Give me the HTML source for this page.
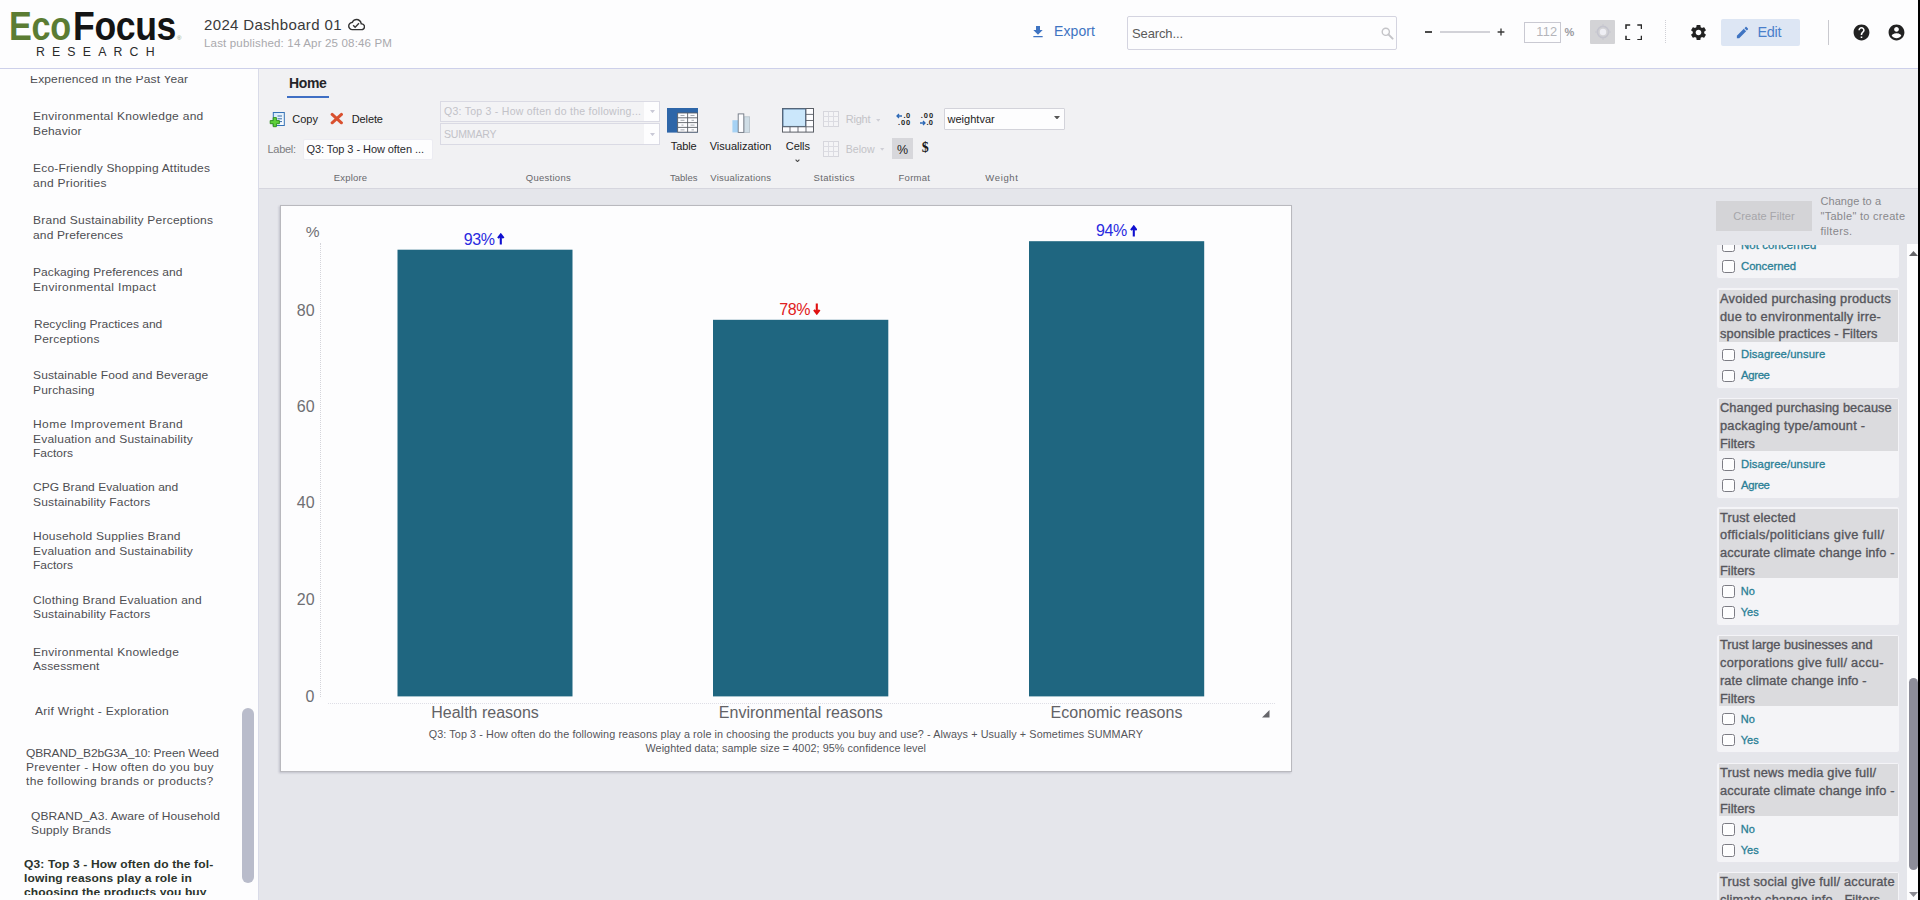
<!DOCTYPE html>
<html lang="en"><head><meta charset="utf-8"><title>2024 Dashboard 01</title>
<style>
html,body{margin:0;padding:0}
body{width:1920px;height:900px;overflow:hidden;position:relative;background:#e5e6eb;font-family:'Liberation Sans', sans-serif;}
header,aside,nav,main,section{display:block;position:static;margin:0;padding:0}
.t{position:absolute;white-space:pre;}
.a{position:absolute;}

</style></head><body>
<header class="topbar">
<div class="a" style="left:0px;top:0px;width:1920px;height:68px;background:#fdfdfe;"></div><div class="a" style="left:0px;top:68px;width:1920px;height:1px;background:#cdd0ea;"></div><svg class="a" style="left:348px;top:16.3px;" width="17.2" height="17.2" viewBox="0 0 24 24"><path fill="#333" d="M19.35 10.04C18.67 6.59 15.64 4 12 4 9.11 4 6.6 5.64 5.35 8.04 2.34 8.36 0 10.91 0 14c0 3.31 2.69 6 6 6h13c2.76 0 5-2.24 5-5 0-2.64-2.05-4.78-4.65-4.96zM19 18H6c-2.21 0-4-1.79-4-4 0-2.05 1.53-3.76 3.56-3.97l1.07-.11.5-.95C8.08 7.14 9.94 6 12 6c2.62 0 4.88 1.86 5.39 4.43l.3 1.5 1.53.11c1.56.1 2.78 1.41 2.78 2.96 0 1.65-1.35 3-3 3zm-9-3.82l-2.09-2.09L6.5 13.5 10 17l6.01-6.01-1.41-1.41z"/></svg><svg class="a" style="left:1030px;top:24.2px;" width="16" height="16" viewBox="0 0 24 24"><path fill="#3f74c2" d="M19 9h-4V3H9v6H5l7 7 7-7zM5 18v2h14v-2H5z"/></svg><div class="a" style="left:1127px;top:16px;width:268px;height:32px;background:#fdfdfe;border:1px solid #d4d4e0;border-radius:2px;"></div><svg class="a" style="left:1381px;top:27px;" width="13" height="13" viewBox="0 0 13 13"><circle cx="4.8" cy="4.8" r="3.6" fill="none" stroke="#c4c4c8" stroke-width="1.4"/><path d="M7.4 7.4 L11.6 11.6" stroke="#c4c4c8" stroke-width="2" stroke-linecap="round"/></svg><div class="a" style="left:1424.5px;top:31.2px;width:7.3px;height:1.4px;background:#4a4a4a;"></div><div class="a" style="left:1440px;top:31.2px;width:50.3px;height:1.6px;background:#d2d2d8;"></div><svg class="a" style="left:1496.5px;top:28px;" width="8" height="8" viewBox="0 0 8 8"><path d="M.6 4h6.800M4 .6v6.800" stroke="#3a3a3a" stroke-width="1.35"/></svg><div class="a" style="left:1524px;top:22px;width:35px;height:19px;background:#fdfdfe;border:1px solid #c9c9d2;"></div><div class="a" style="left:1590px;top:20px;width:25px;height:24px;background:#d3d3d6;border-radius:1px;"></div><svg class="a" style="left:1593.5px;top:23px;" width="18" height="18" viewBox="0 0 18 18"><circle cx="9" cy="9" r="5.600" fill="none" stroke="#c4c4ce" stroke-width="1.6"/><circle cx="9" cy="9" r="3.200" fill="#eeeef4"/><path d="M9 1v2.500M9 14.500V17M1 9h2.500M14.500 9H17" stroke="#c8c8d0" stroke-width="1.2"/></svg><svg class="a" style="left:1624.5px;top:23.6px;" width="17.5" height="16.8" viewBox="0 0 17.5 16.8"><path d="M1 5V1h4.200M12.300 1h4.200v4M16.500 11.800v4h-4.200M5.200 15.800H1v-4" fill="none" stroke="#2a2a2a" stroke-width="1.55"/></svg><div class="a" style="left:1665px;top:20px;width:0px;height:23px;background:transparent;border-left:1px dotted #d0d0d6;"></div><svg class="a" style="left:1688.5px;top:22.5px;" width="19" height="19" viewBox="0 0 24 24"><path fill="#222" d="M19.14 12.94c.04-.3.06-.61.06-.94 0-.32-.02-.64-.07-.94l2.03-1.58c.18-.14.23-.41.12-.61l-1.92-3.32c-.12-.22-.37-.29-.59-.22l-2.39.96c-.5-.38-1.03-.7-1.62-.94l-.36-2.54c-.04-.24-.24-.41-.48-.41h-3.84c-.24 0-.43.17-.47.41l-.36 2.54c-.59.24-1.13.57-1.62.94l-2.39-.96c-.22-.08-.47 0-.59.22L2.74 8.87c-.12.21-.08.47.12.61l2.03 1.58c-.05.3-.09.63-.09.94s.02.64.07.94l-2.03 1.58c-.18.14-.23.41-.12.61l1.92 3.32c.12.22.37.29.59.22l2.39-.96c.5.38 1.03.7 1.62.94l.36 2.54c.05.24.24.41.48.41h3.84c.24 0 .44-.17.47-.41l.36-2.54c.59-.24 1.13-.56 1.62-.94l2.39.96c.22.08.47 0 .59-.22l1.92-3.32c.12-.22.07-.47-.12-.61l-2.01-1.58zM12 15.6c-1.98 0-3.6-1.62-3.6-3.6s1.62-3.6 3.6-3.6 3.6 1.62 3.6 3.6-1.62 3.6-3.6 3.6z"/></svg><div class="a" style="left:1721px;top:19px;width:79px;height:27px;background:#dde6f4;border-radius:2px;"></div><svg class="a" style="left:1734.5px;top:24.5px;" width="15" height="15" viewBox="0 0 24 24"><path fill="#3f74c2" d="M3 17.25V21h3.75L17.81 9.94l-3.75-3.75L3 17.25zM20.71 7.04c.39-.39.39-1.02 0-1.41l-2.34-2.34c-.39-.39-1.02-.39-1.41 0l-1.83 1.83 3.75 3.75 1.83-1.83z"/></svg><div class="a" style="left:1828px;top:19.5px;width:1px;height:25px;background:#c9c9cf;"></div><svg class="a" style="left:1851.5px;top:22.5px;" width="19" height="19" viewBox="0 0 24 24"><path fill="#222" d="M12 2C6.48 2 2 6.48 2 12s4.48 10 10 10 10-4.48 10-10S17.52 2 12 2zm1 17h-2v-2h2v2zm2.07-7.75l-.9.92C13.45 12.9 13 13.5 13 15h-2v-.5c0-1.1.45-2.1 1.17-2.83l1.24-1.26c.37-.36.59-.86.59-1.41 0-1.1-.9-2-2-2s-2 .9-2 2H8c0-2.21 1.79-4 4-4s4 1.79 4 4c0 .88-.36 1.68-.93 2.25z"/></svg><svg class="a" style="left:1886.5px;top:22.5px;" width="19" height="19" viewBox="0 0 24 24"><path fill="#222" d="M12 2C6.48 2 2 6.48 2 12s4.48 10 10 10 10-4.48 10-10S17.52 2 12 2zm0 3c1.66 0 3 1.34 3 3s-1.34 3-3 3-3-1.34-3-3 1.34-3 3-3zm0 14.2c-2.5 0-4.71-1.28-6-3.22.03-1.99 4-3.08 6-3.08 1.99 0 5.97 1.09 6 3.08-1.29 1.94-3.5 3.22-6 3.22z"/></svg>
<span class="t" style="left:9.4px;top:2px;font-size:40px;line-height:48px;color:#5b7c33;font-weight:700;letter-spacing:-0.4px;transform-origin:0 0;transform:scaleX(0.8557);">Eco</span>
<span class="t" style="left:73.1px;top:2px;font-size:40px;line-height:48px;color:#141414;font-weight:700;letter-spacing:-0.4px;transform-origin:0 0;transform:scaleX(0.8899);">Focus</span>
<span class="t" style="left:177.0px;top:33px;font-size:6px;line-height:10px;color:#8a9a7a;">®</span>
<span class="t" style="left:35.9px;top:43px;font-size:12.3px;line-height:18px;color:#2a2a2a;letter-spacing:7.194px;">RESEARCH</span>
<span class="t" style="left:204.0px;top:14px;font-size:15px;line-height:21px;color:#3a3a3a;letter-spacing:0.357px;">2024 Dashboard 01</span>
<span class="t" style="left:204.0px;top:35px;font-size:11px;line-height:16px;color:#a9a9ad;letter-spacing:0.144px;transform-origin:0 0;transform:scaleX(1.05);">Last published: 14 Apr 25 08:46 PM</span>
<span class="t" style="left:1054.0px;top:21px;font-size:14px;line-height:20px;color:#3f74c2;letter-spacing:0.106px;">Export</span>
<span class="t" style="left:1132.0px;top:24px;font-size:13px;line-height:19px;color:#5a5a5a;letter-spacing:-0.129px;">Search...</span>
<span class="t" style="left:1536.2px;top:22px;font-size:12.8px;line-height:19px;color:#b4b4ba;letter-spacing:0.297px;">112</span>
<span class="t" style="left:1564.6px;top:24px;font-size:11px;line-height:16px;color:#9a9aa0;font-weight:700;">%</span>
<span class="t" style="left:1757.5px;top:22px;font-size:14.5px;line-height:20px;color:#4a7fcb;letter-spacing:-0.333px;">Edit</span>

</header>
<aside class="sidebar">
<div class="a" style="left:0px;top:69px;width:258px;height:831px;background:#fdfdfe;"></div><div class="a" style="left:258px;top:69px;width:1px;height:831px;background:#d9dbe8;"></div><div class="a" style="left:242px;top:708px;width:11.5px;height:175px;background:#b9bccb;border-radius:6px;"></div>
<span class="t" style="left:29.7px;top:71px;font-size:11.5px;line-height:16px;color:#4e4e52;letter-spacing:0.133px;transform-origin:0 0;transform:scaleX(1.045);">Experienced in the Past Year</span>
<span class="t" style="left:33.0px;top:108px;font-size:11.5px;line-height:16px;color:#4e4e52;letter-spacing:0.268px;transform-origin:0 0;transform:scaleX(1.045);">Environmental Knowledge and</span>
<span class="t" style="left:33.0px;top:123px;font-size:11.5px;line-height:16px;color:#4e4e52;letter-spacing:0.146px;transform-origin:0 0;transform:scaleX(1.045);">Behavior</span>
<span class="t" style="left:33.0px;top:160px;font-size:11.5px;line-height:16px;color:#4e4e52;letter-spacing:0.191px;transform-origin:0 0;transform:scaleX(1.045);">Eco-Friendly Shopping Attitudes</span>
<span class="t" style="left:33.0px;top:175px;font-size:11.5px;line-height:16px;color:#4e4e52;letter-spacing:0.247px;transform-origin:0 0;transform:scaleX(1.045);">and Priorities</span>
<span class="t" style="left:33.0px;top:212px;font-size:11.5px;line-height:16px;color:#4e4e52;letter-spacing:0.215px;transform-origin:0 0;transform:scaleX(1.045);">Brand Sustainability Perceptions</span>
<span class="t" style="left:33.0px;top:227px;font-size:11.5px;line-height:16px;color:#4e4e52;letter-spacing:0.124px;transform-origin:0 0;transform:scaleX(1.045);">and Preferences</span>
<span class="t" style="left:33.0px;top:264px;font-size:11.5px;line-height:16px;color:#4e4e52;letter-spacing:0.074px;transform-origin:0 0;transform:scaleX(1.045);">Packaging Preferences and</span>
<span class="t" style="left:33.0px;top:279px;font-size:11.5px;line-height:16px;color:#4e4e52;letter-spacing:0.331px;transform-origin:0 0;transform:scaleX(1.045);">Environmental Impact</span>
<span class="t" style="left:34.2px;top:316px;font-size:11.5px;line-height:16px;color:#4e4e52;letter-spacing:0.002px;transform-origin:0 0;transform:scaleX(1.045);">Recycling Practices and</span>
<span class="t" style="left:34.2px;top:331px;font-size:11.5px;line-height:16px;color:#4e4e52;letter-spacing:0.195px;transform-origin:0 0;transform:scaleX(1.045);">Perceptions</span>
<span class="t" style="left:32.5px;top:367px;font-size:11.5px;line-height:16px;color:#4e4e52;letter-spacing:0.122px;transform-origin:0 0;transform:scaleX(1.045);">Sustainable Food and Beverage</span>
<span class="t" style="left:32.5px;top:382px;font-size:11.5px;line-height:16px;color:#4e4e52;letter-spacing:0.145px;transform-origin:0 0;transform:scaleX(1.045);">Purchasing</span>
<span class="t" style="left:33.0px;top:416px;font-size:11.5px;line-height:16px;color:#4e4e52;letter-spacing:0.404px;transform-origin:0 0;transform:scaleX(1.045);">Home Improvement Brand</span>
<span class="t" style="left:33.0px;top:431px;font-size:11.5px;line-height:16px;color:#4e4e52;letter-spacing:0.210px;transform-origin:0 0;transform:scaleX(1.045);">Evaluation and Sustainability</span>
<span class="t" style="left:33.0px;top:445px;font-size:11.5px;line-height:16px;color:#4e4e52;letter-spacing:-0.011px;transform-origin:0 0;transform:scaleX(1.045);">Factors</span>
<span class="t" style="left:33.0px;top:479px;font-size:11.5px;line-height:16px;color:#4e4e52;letter-spacing:0.041px;transform-origin:0 0;transform:scaleX(1.045);">CPG Brand Evaluation and</span>
<span class="t" style="left:33.0px;top:494px;font-size:11.5px;line-height:16px;color:#4e4e52;letter-spacing:0.141px;transform-origin:0 0;transform:scaleX(1.045);">Sustainability Factors</span>
<span class="t" style="left:33.0px;top:528px;font-size:11.5px;line-height:16px;color:#4e4e52;letter-spacing:0.216px;transform-origin:0 0;transform:scaleX(1.045);">Household Supplies Brand</span>
<span class="t" style="left:33.0px;top:543px;font-size:11.5px;line-height:16px;color:#4e4e52;letter-spacing:0.210px;transform-origin:0 0;transform:scaleX(1.045);">Evaluation and Sustainability</span>
<span class="t" style="left:33.0px;top:557px;font-size:11.5px;line-height:16px;color:#4e4e52;letter-spacing:-0.011px;transform-origin:0 0;transform:scaleX(1.045);">Factors</span>
<span class="t" style="left:33.0px;top:592px;font-size:11.5px;line-height:16px;color:#4e4e52;letter-spacing:0.217px;transform-origin:0 0;transform:scaleX(1.045);">Clothing Brand Evaluation and</span>
<span class="t" style="left:33.0px;top:606px;font-size:11.5px;line-height:16px;color:#4e4e52;letter-spacing:0.141px;transform-origin:0 0;transform:scaleX(1.045);">Sustainability Factors</span>
<span class="t" style="left:33.3px;top:644px;font-size:11.5px;line-height:16px;color:#4e4e52;letter-spacing:0.273px;transform-origin:0 0;transform:scaleX(1.045);">Environmental Knowledge</span>
<span class="t" style="left:33.3px;top:658px;font-size:11.5px;line-height:16px;color:#4e4e52;letter-spacing:0.100px;transform-origin:0 0;transform:scaleX(1.045);">Assessment</span>
<span class="t" style="left:34.5px;top:703px;font-size:11.5px;line-height:16px;color:#4e4e52;letter-spacing:0.284px;transform-origin:0 0;transform:scaleX(1.045);">Arif Wright - Exploration</span>
<span class="t" style="left:25.8px;top:745px;font-size:11.5px;line-height:16px;color:#4e4e52;letter-spacing:-0.140px;transform-origin:0 0;transform:scaleX(1.045);">QBRAND_B2bG3A_10: Preen Weed</span>
<span class="t" style="left:25.8px;top:759px;font-size:11.5px;line-height:16px;color:#4e4e52;letter-spacing:0.261px;transform-origin:0 0;transform:scaleX(1.045);">Preventer - How often do you buy</span>
<span class="t" style="left:25.8px;top:773px;font-size:11.5px;line-height:16px;color:#4e4e52;letter-spacing:0.304px;transform-origin:0 0;transform:scaleX(1.045);">the following brands or products?</span>
<span class="t" style="left:30.8px;top:808px;font-size:11.5px;line-height:16px;color:#4e4e52;letter-spacing:0.071px;transform-origin:0 0;transform:scaleX(1.045);">QBRAND_A3. Aware of Household</span>
<span class="t" style="left:30.8px;top:822px;font-size:11.5px;line-height:16px;color:#4e4e52;letter-spacing:0.147px;transform-origin:0 0;transform:scaleX(1.045);">Supply Brands</span>
<span class="t" style="left:23.8px;top:856px;font-size:11.5px;line-height:16px;color:#2b332b;font-weight:700;letter-spacing:0.135px;transform-origin:0 0;transform:scaleX(1.045);">Q3: Top 3 - How often do the fol-</span>
<span class="t" style="left:23.8px;top:870px;font-size:11.5px;line-height:16px;color:#2b332b;font-weight:700;letter-spacing:0.123px;transform-origin:0 0;transform:scaleX(1.045);">lowing reasons play a role in</span>
<span class="t" style="left:23.8px;top:884px;font-size:11.5px;line-height:16px;color:#2b332b;font-weight:700;letter-spacing:0.122px;transform-origin:0 0;transform:scaleX(1.045);">choosing the products you buy</span>
<div class="a" style="left:0px;top:69px;width:257px;height:6.5px;background:#fdfdfe;"></div><div class="a" style="left:0px;top:895px;width:257px;height:5px;background:#fdfdfe;"></div>
</aside>
<nav class="ribbon">
<div class="a" style="left:259px;top:69px;width:1661px;height:119.5px;background:#f1f1f3;"></div><div class="a" style="left:259px;top:188px;width:1661px;height:1px;background:#d6d6de;"></div><div class="a" style="left:287px;top:96px;width:41.5px;height:2px;background:#3f6fc4;"></div><svg class="a" style="left:269px;top:111px;" width="17" height="17" viewBox="0 0 17 17"><defs><linearGradient id="cg" x1="0" y1="0" x2="1" y2="1"><stop offset="0" stop-color="#cfe6fa"/><stop offset="1" stop-color="#ffffff"/></linearGradient></defs><rect x="4.3" y="1.5" width="11" height="13" fill="url(#cg)" stroke="#3572b6" stroke-width="1"/><path d="M8.500 5h4.500M8.500 7.800h4.500M8.500 10.600h4.500" stroke="#3b6ea8" stroke-width="1"/><path d="M1.200 9.600h3V6.600h3.200v3h3v3.100h-3v3H4.200v-3h-3z" fill="#5fd13a" stroke="#2a8a1a" stroke-width=".9"/></svg><svg class="a" style="left:329.6px;top:111.8px;" width="13.6" height="13.2" viewBox="0 0 14 13"><path d="M2.200 2.200 L11.800 10.800 M11.800 2.200 L2.200 10.800" stroke="#d9502f" stroke-width="3.1" stroke-linecap="round"/></svg><div class="a" style="left:302.6px;top:138.5px;width:128px;height:19px;background:#fdfdfe;border:1px solid #ececf2;border-radius:2px;"></div><div class="a" style="left:440.3px;top:100.5px;width:218px;height:19.3px;background:#f3f3f5;border:1px solid #dadae4;"></div><div class="a" style="left:644.4px;top:101.5px;width:15px;height:19.3px;background:#fdfdfe;"></div><svg class="a" style="left:650px;top:109.5px;" width="5" height="3.2" viewBox="0 0 5 3.2"><path d="M0 0h5L2.500 3.200z" fill="#c9c9d6"/></svg><div class="a" style="left:440.3px;top:123.3px;width:218px;height:20.2px;background:#f3f3f5;border:1px solid #dadae4;"></div><div class="a" style="left:644.4px;top:124.3px;width:15px;height:20.2px;background:#fdfdfe;"></div><svg class="a" style="left:650px;top:133px;" width="5" height="3.2" viewBox="0 0 5 3.2"><path d="M0 0h5L2.500 3.200z" fill="#c9c9d6"/></svg><svg class="a" style="left:667.3px;top:108px;" width="31" height="24.6" viewBox="0 0 31 24.6"><rect x="0" y="0" width="31" height="24.6" fill="#2e66a8"/><rect x="10.600" y="5" width="19.900" height="19.200" fill="#fdfdff"/><path d="M10.600 5h19.900v19.200M10.600 9.800h19.900M10.600 14.600h19.900M10.600 19.400h19.900M10.600 24.200h19.900M10.600 5v19.200M20.600 5v19.200" fill="none" stroke="#5a5f66" stroke-width=".9"/><path d="M13.500 7.500h4M23.500 7.500h4M13.500 12.300h4M24.500 12.300h2.500M14.500 17.100h2M23.500 17.100h4M13.500 21.900h4M24.500 21.900h2.500" stroke="#9aa0a8" stroke-width=".9"/></svg><svg class="a" style="left:732px;top:112.5px;" width="18.5" height="20" viewBox="0 0 18.5 20"><rect x="0.400" y="7.200" width="5.600" height="12.200" fill="#a6d2f4"/><rect x="12" y="3.800" width="5.600" height="15.600" fill="#cfdde6" stroke="#b4c0c8" stroke-width=".8"/><rect x="6.200" y="0.900" width="5.600" height="18.500" fill="#fdfdff" stroke="#6e7680" stroke-width=".9"/></svg><svg class="a" style="left:782px;top:108px;" width="32" height="24.6" viewBox="0 0 32 24.6"><rect x=".5" y=".5" width="31" height="23.600" fill="#fdfdff" stroke="#5b5f66"/><rect x="1" y="1" width="22.500" height="17.400" fill="#cbe7fb" stroke="#4d6f92" stroke-width=".9"/><path d="M24 .5v23.600M.5 18.800h31M24 6.400h7.500M24 12.500h7.500M8 18.800v5.300M16 18.800v5.300" stroke="#5b5f66" stroke-width=".9"/></svg><svg class="a" style="left:795px;top:158.8px;" width="5" height="3.6" viewBox="0 0 5 3.6"><path d="M.6 .7l1.900 1.900L4.400 .7" fill="none" stroke="#4a4a4a" stroke-width="1.15"/></svg><svg class="a" style="left:823px;top:111px;" width="16" height="16" viewBox="0 0 16 16"><rect x=".5" y=".5" width="15" height="15" fill="#f4f4f6" stroke="#d6d6dc"/><path d="M.5 5.5h15M.5 10.5h15M5.5 .5v15M10.5 .5v15" stroke="#dcdce2"/></svg><svg class="a" style="left:876px;top:118.8px;" width="4.4" height="2.8" viewBox="0 0 6 4"><path d="M0 0h6L3 4z" fill="#cfcfd6"/></svg><svg class="a" style="left:823px;top:140.5px;" width="16" height="16" viewBox="0 0 16 16"><rect x=".5" y=".5" width="15" height="15" fill="#f4f4f6" stroke="#d6d6dc"/><path d="M.5 5.5h15M.5 10.5h15M5.5 .5v15M10.5 .5v15" stroke="#dcdce2"/></svg><svg class="a" style="left:880.2px;top:148.3px;" width="4.4" height="2.8" viewBox="0 0 6 4"><path d="M0 0h6L3 4z" fill="#cfcfd6"/></svg><svg class="a" style="left:895.5px;top:112.5px;" width="7" height="6" viewBox="0 0 7 6"><path d="M1 3h5M3 1L1 3l2 2" fill="none" stroke="#2d69b6" stroke-width="1.3"/></svg><svg class="a" style="left:918.5px;top:119.5px;" width="7" height="6" viewBox="0 0 7 6"><path d="M1 3h5M4 1l2 2-2 2" fill="none" stroke="#2d69b6" stroke-width="1.3"/></svg><div class="a" style="left:892.2px;top:138px;width:20.7px;height:21px;background:#d7d7db;"></div><div class="a" style="left:944px;top:108px;width:118.5px;height:19.5px;background:#fdfdfe;border:1px solid #d3d3da;border-radius:1px;"></div><svg class="a" style="left:1053.5px;top:115.5px;" width="6" height="3.5" viewBox="0 0 6 3.5"><path d="M0 0h6L3 3.5z" fill="#555"/></svg>
<span class="t" style="left:289.0px;top:73px;font-size:14px;line-height:20px;color:#252528;font-weight:700;letter-spacing:-0.369px;">Home</span>
<span class="t" style="left:292.2px;top:111px;font-size:11px;line-height:16px;color:#222;letter-spacing:0.038px;">Copy</span>
<span class="t" style="left:351.7px;top:111px;font-size:11px;line-height:16px;color:#222;letter-spacing:-0.099px;">Delete</span>
<span class="t" style="left:267.5px;top:141px;font-size:11px;line-height:16px;color:#7c7c80;letter-spacing:-0.297px;">Label:</span>
<span class="t" style="left:306.5px;top:141px;font-size:11px;line-height:16px;color:#2a2a2e;letter-spacing:-0.064px;">Q3: Top 3 - How often ...</span>
<span class="t" style="left:444.0px;top:103px;font-size:10.5px;line-height:16px;color:#c2c2c8;letter-spacing:0.260px;">Q3: Top 3 - How often do the following...</span>
<span class="t" style="left:444.0px;top:126px;font-size:10.5px;line-height:16px;color:#c2c2c8;letter-spacing:-0.164px;">SUMMARY</span>
<span class="t" style="left:670.8px;top:138px;font-size:11px;line-height:16px;color:#222;letter-spacing:-0.124px;">Table</span>
<span class="t" style="left:709.7px;top:138px;font-size:11px;line-height:16px;color:#222;letter-spacing:0.011px;">Visualization</span>
<span class="t" style="left:785.8px;top:138px;font-size:11px;line-height:16px;color:#222;letter-spacing:-0.063px;">Cells</span>
<span class="t" style="left:845.8px;top:111px;font-size:11px;line-height:16px;color:#c3c3c7;letter-spacing:-0.247px;">Right</span>
<span class="t" style="left:845.8px;top:141px;font-size:10.6px;line-height:16px;color:#c3c3c7;letter-spacing:-0.015px;">Below</span>
<span class="t" style="left:903.6px;top:109px;font-size:7.5px;line-height:13px;color:#222;font-weight:700;letter-spacing:.3px;">.0</span>
<span class="t" style="left:898.0px;top:116px;font-size:7.5px;line-height:13px;color:#222;font-weight:700;letter-spacing:0.931px;">.00</span>
<span class="t" style="left:920.8px;top:109px;font-size:7.5px;line-height:13px;color:#222;font-weight:700;letter-spacing:0.931px;">.00</span>
<span class="t" style="left:926.4px;top:116px;font-size:7.5px;line-height:13px;color:#222;font-weight:700;letter-spacing:.3px;">.0</span>
<span class="t" style="left:897.1px;top:140px;font-size:13.5px;line-height:19px;color:#222;letter-spacing:0px;transform-origin:0 0;transform:scaleX(0.9238);">%</span>
<span class="t" style="left:921.8px;top:138px;font-size:14px;line-height:20px;color:#1a1a1a;font-weight:700;font-family:'Liberation Serif', serif;">$</span>
<span class="t" style="left:947.5px;top:111px;font-size:11px;line-height:16px;color:#222;letter-spacing:0.015px;">weightvar</span>
<span class="t" style="left:333.8px;top:170px;font-size:9.5px;line-height:15px;color:#68686c;letter-spacing:0.164px;">Explore</span>
<span class="t" style="left:525.8px;top:170px;font-size:9.5px;line-height:15px;color:#68686c;letter-spacing:0.265px;">Questions</span>
<span class="t" style="left:669.9px;top:170px;font-size:9.5px;line-height:15px;color:#68686c;letter-spacing:0.046px;">Tables</span>
<span class="t" style="left:710.3px;top:170px;font-size:9.5px;line-height:15px;color:#68686c;letter-spacing:0.214px;">Visualizations</span>
<span class="t" style="left:813.6px;top:170px;font-size:9.5px;line-height:15px;color:#68686c;letter-spacing:0.320px;">Statistics</span>
<span class="t" style="left:898.5px;top:170px;font-size:9.5px;line-height:15px;color:#68686c;letter-spacing:0.281px;">Format</span>
<span class="t" style="left:985.3px;top:170px;font-size:9.5px;line-height:15px;color:#68686c;letter-spacing:0.639px;">Weight</span>

</nav>
<main class="canvas">
<div class="a" style="left:280px;top:205px;width:1010px;height:565px;background:#fdfdfe;border:1px solid #b9b9be;box-shadow:-1px 1px 2px rgba(120,120,140,.35);"></div><div class="a" style="left:320px;top:243px;width:0px;height:454px;background:transparent;border-left:1px dotted #d4d4da;"></div><div class="a" style="left:328px;top:703px;width:947px;height:0px;background:transparent;border-top:1px dotted #dedee6;"></div><svg class="a" style="left:390px;top:235px;" width="830" height="470" viewBox="0 0 830 470"><rect x="7.5" y="14.7" width="175" height="446.7" fill="#1f6680"/><rect x="323" y="84.8" width="175.3" height="376.6" fill="#1f6680"/><rect x="639" y="6.2" width="175.2" height="455.2" fill="#1f6680"/></svg><svg class="a" style="left:497.3px;top:233.2px;" width="7.6" height="12" viewBox="0 0 7.6 12"><path d="M3.800 11.600V2.200M1 5.200L3.800 1.500l2.800 3.700" fill="none" stroke="#1010d0" stroke-width="2.1"/></svg><svg class="a" style="left:813.2px;top:303.2px;" width="7.6" height="12" viewBox="0 0 7.6 12"><path d="M3.800 .4v9.400M1 6.800l2.800 3.700L6.600 6.800" fill="none" stroke="#e01010" stroke-width="2.1"/></svg><svg class="a" style="left:1129.6px;top:224.8px;" width="7.6" height="12" viewBox="0 0 7.6 12"><path d="M3.800 11.600V2.200M1 5.200L3.800 1.500l2.800 3.700" fill="none" stroke="#1010d0" stroke-width="2.1"/></svg><svg class="a" style="left:1261px;top:709px;" width="9" height="9" viewBox="0 0 9 9"><path d="M8.5 1v7.5H1z" fill="#66666a"/></svg>
<span class="t" style="left:305.8px;top:221px;font-size:15.5px;line-height:21px;color:#6f6f73;">%</span>
<span class="t" style="left:296.7px;top:300px;font-size:16px;line-height:21px;color:#6f6f73;letter-spacing:0.203px;">80</span>
<span class="t" style="left:296.7px;top:396px;font-size:16px;line-height:21px;color:#6f6f73;letter-spacing:0.203px;">60</span>
<span class="t" style="left:296.7px;top:492px;font-size:16px;line-height:21px;color:#6f6f73;letter-spacing:0.203px;">40</span>
<span class="t" style="left:296.7px;top:589px;font-size:16px;line-height:21px;color:#6f6f73;letter-spacing:0.203px;">20</span>
<span class="t" style="left:305.6px;top:686px;font-size:16px;line-height:21px;color:#6f6f73;">0</span>
<span class="t" style="left:463.7px;top:229px;font-size:16px;line-height:21px;color:#2a2ae0;letter-spacing:-0.366px;">93%</span>
<span class="t" style="left:779.3px;top:299px;font-size:16px;line-height:21px;color:#e02020;letter-spacing:-0.416px;">78%</span>
<span class="t" style="left:1096.0px;top:220px;font-size:16px;line-height:21px;color:#2a2ae0;letter-spacing:-0.366px;">94%</span>
<span class="t" style="left:431.3px;top:702px;font-size:16px;line-height:21px;color:#626266;letter-spacing:-0.010px;">Health reasons</span>
<span class="t" style="left:718.8px;top:702px;font-size:16px;line-height:21px;color:#626266;letter-spacing:0.018px;">Environmental reasons</span>
<span class="t" style="left:1050.6px;top:702px;font-size:16px;line-height:21px;color:#626266;letter-spacing:0.012px;">Economic reasons</span>
<span class="t" style="left:428.7px;top:726px;font-size:10.8px;line-height:16px;color:#55555a;letter-spacing:0.099px;">Q3: Top 3 - How often do the following reasons play a role in choosing the products you buy and use? - Always + Usually + Sometimes SUMMARY</span>
<span class="t" style="left:645.5px;top:740px;font-size:10.8px;line-height:16px;color:#55555a;letter-spacing:0.069px;">Weighted data; sample size = 4002; 95% confidence level</span>

</main>
<section class="filters">
<div class="a" style="left:1716px;top:201px;width:96px;height:29.5px;background:#d4d4d7;"></div><div class="a" style="left:1906.5px;top:243.5px;width:11.5px;height:656.5px;background:#fdfdfe;"></div><svg class="a" style="left:1908.5px;top:251px;" width="9" height="5" viewBox="0 0 9 5"><path d="M0 5h9L4.5 0z" fill="#66666a"/></svg><svg class="a" style="left:1908.5px;top:892px;" width="9" height="5" viewBox="0 0 9 5"><path d="M0 0h9L4.5 5z" fill="#8a8a92"/></svg><div class="a" style="left:1909px;top:678px;width:9px;height:191.5px;background:#8d8d99;border-radius:5px;"></div><div class="a" style="left:1918px;top:0px;width:2px;height:900px;background:#000;"></div><div class="a" style="left:1716.3px;top:244.5px;width:182px;height:33.3px;background:#f4f4f7;border:1px solid #e6e6ec;border-top:none;border-radius:0 0 3px 3px;"></div><div class="a" style="left:1722.3px;top:239px;width:10.6px;height:10.6px;background:#fdfdfe;border:1px solid #7c7c84;border-radius:2.5px;"></div><div class="a" style="left:1722.3px;top:260px;width:10.6px;height:10.6px;background:#fdfdfe;border:1px solid #7c7c84;border-radius:2.5px;"></div><div class="a" style="left:1716.3px;top:287.4px;width:182px;height:99.63999999999999px;background:#f4f4f7;border:1px solid #e6e6ec;border-radius:3px;"></div><div class="a" style="left:1719.3px;top:289.7px;width:179px;height:51.94px;background:#dbdbde;"></div><div class="a" style="left:1722.3px;top:348.64px;width:10.6px;height:10.6px;background:#fdfdfe;border:1px solid #7c7c84;border-radius:2.5px;"></div><div class="a" style="left:1722.3px;top:369.64px;width:10.6px;height:10.6px;background:#fdfdfe;border:1px solid #7c7c84;border-radius:2.5px;"></div><div class="a" style="left:1716.3px;top:397.0px;width:182px;height:99.63999999999999px;background:#f4f4f7;border:1px solid #e6e6ec;border-radius:3px;"></div><div class="a" style="left:1719.3px;top:399.3px;width:179px;height:51.94px;background:#dbdbde;"></div><div class="a" style="left:1722.3px;top:458.24px;width:10.6px;height:10.6px;background:#fdfdfe;border:1px solid #7c7c84;border-radius:2.5px;"></div><div class="a" style="left:1722.3px;top:479.24px;width:10.6px;height:10.6px;background:#fdfdfe;border:1px solid #7c7c84;border-radius:2.5px;"></div><div class="a" style="left:1716.3px;top:506.3px;width:182px;height:117.51000000000005px;background:#f4f4f7;border:1px solid #e6e6ec;border-radius:3px;"></div><div class="a" style="left:1719.3px;top:508.6px;width:179px;height:69.81000000000006px;background:#dbdbde;"></div><div class="a" style="left:1722.3px;top:585.4100000000001px;width:10.6px;height:10.6px;background:#fdfdfe;border:1px solid #7c7c84;border-radius:2.5px;"></div><div class="a" style="left:1722.3px;top:606.4100000000001px;width:10.6px;height:10.6px;background:#fdfdfe;border:1px solid #7c7c84;border-radius:2.5px;"></div><div class="a" style="left:1716.3px;top:633.7px;width:182px;height:117.50999999999999px;background:#f4f4f7;border:1px solid #e6e6ec;border-radius:3px;"></div><div class="a" style="left:1719.3px;top:636px;width:179px;height:69.81000000000006px;background:#dbdbde;"></div><div class="a" style="left:1722.3px;top:712.8100000000001px;width:10.6px;height:10.6px;background:#fdfdfe;border:1px solid #7c7c84;border-radius:2.5px;"></div><div class="a" style="left:1722.3px;top:733.8100000000001px;width:10.6px;height:10.6px;background:#fdfdfe;border:1px solid #7c7c84;border-radius:2.5px;"></div><div class="a" style="left:1716.3px;top:761.7px;width:182px;height:99.63999999999999px;background:#f4f4f7;border:1px solid #e6e6ec;border-radius:3px;"></div><div class="a" style="left:1719.3px;top:764px;width:179px;height:51.940000000000055px;background:#dbdbde;"></div><div class="a" style="left:1722.3px;top:822.94px;width:10.6px;height:10.6px;background:#fdfdfe;border:1px solid #7c7c84;border-radius:2.5px;"></div><div class="a" style="left:1722.3px;top:843.94px;width:10.6px;height:10.6px;background:#fdfdfe;border:1px solid #7c7c84;border-radius:2.5px;"></div><div class="a" style="left:1716.3px;top:871.0px;width:182px;height:40.0px;background:#f4f4f7;border:1px solid #e6e6ec;border-radius:3px;"></div><div class="a" style="left:1719.3px;top:873.3px;width:179px;height:34.07000000000005px;background:#dbdbde;"></div>
<span class="t" style="left:1733.3px;top:208px;font-size:11px;line-height:16px;color:#a6a6aa;letter-spacing:0.072px;">Create Filter</span>
<span class="t" style="left:1820.5px;top:193px;font-size:11px;line-height:16px;color:#88888c;letter-spacing:0.056px;">Change to a</span>
<span class="t" style="left:1820.5px;top:208px;font-size:11px;line-height:16px;color:#88888c;letter-spacing:0.283px;">&quot;Table&quot; to create</span>
<span class="t" style="left:1820.5px;top:223px;font-size:11px;line-height:16px;color:#88888c;letter-spacing:0.308px;">filters.</span>
<span class="t" style="left:1740.8px;top:237px;font-size:11px;line-height:16px;color:#2a7f96;letter-spacing:0.122px;transform-origin:0 0;transform:scaleX(1.03);-webkit-text-stroke:0.3px #2a7f96;">Not concerned</span>
<span class="t" style="left:1740.8px;top:258px;font-size:11px;line-height:16px;color:#2a7f96;letter-spacing:-0.054px;transform-origin:0 0;transform:scaleX(1.03);-webkit-text-stroke:0.3px #2a7f96;">Concerned</span>
<span class="t" style="left:1720.0px;top:290px;font-size:12.3px;line-height:18px;color:#56565c;letter-spacing:0.225px;transform-origin:0 0;transform:scaleX(1.04);-webkit-text-stroke:0.35px #56565c;">Avoided purchasing products</span>
<span class="t" style="left:1720.0px;top:308px;font-size:12.3px;line-height:18px;color:#56565c;letter-spacing:0.208px;transform-origin:0 0;transform:scaleX(1.04);-webkit-text-stroke:0.35px #56565c;">due to environmentally irre-</span>
<span class="t" style="left:1720.0px;top:325px;font-size:12.3px;line-height:18px;color:#56565c;letter-spacing:0.088px;transform-origin:0 0;transform:scaleX(1.04);-webkit-text-stroke:0.35px #56565c;">sponsible practices - Filters</span>
<span class="t" style="left:1740.8px;top:346px;font-size:11px;line-height:16px;color:#2a7f96;letter-spacing:0.073px;transform-origin:0 0;transform:scaleX(1.03);-webkit-text-stroke:0.3px #2a7f96;">Disagree/unsure</span>
<span class="t" style="left:1740.8px;top:367px;font-size:11px;line-height:16px;color:#2a7f96;letter-spacing:-0.325px;transform-origin:0 0;transform:scaleX(1.03);-webkit-text-stroke:0.3px #2a7f96;">Agree</span>
<span class="t" style="left:1720.0px;top:399px;font-size:12.3px;line-height:18px;color:#56565c;letter-spacing:0.068px;transform-origin:0 0;transform:scaleX(1.04);-webkit-text-stroke:0.35px #56565c;">Changed purchasing because</span>
<span class="t" style="left:1720.0px;top:417px;font-size:12.3px;line-height:18px;color:#56565c;letter-spacing:0.216px;transform-origin:0 0;transform:scaleX(1.04);-webkit-text-stroke:0.35px #56565c;">packaging type/amount -</span>
<span class="t" style="left:1720.0px;top:435px;font-size:12.3px;line-height:18px;color:#56565c;letter-spacing:0.028px;transform-origin:0 0;transform:scaleX(1.04);-webkit-text-stroke:0.35px #56565c;">Filters</span>
<span class="t" style="left:1740.8px;top:456px;font-size:11px;line-height:16px;color:#2a7f96;letter-spacing:0.073px;transform-origin:0 0;transform:scaleX(1.03);-webkit-text-stroke:0.3px #2a7f96;">Disagree/unsure</span>
<span class="t" style="left:1740.8px;top:477px;font-size:11px;line-height:16px;color:#2a7f96;letter-spacing:-0.325px;transform-origin:0 0;transform:scaleX(1.03);-webkit-text-stroke:0.3px #2a7f96;">Agree</span>
<span class="t" style="left:1720.0px;top:509px;font-size:12.3px;line-height:18px;color:#56565c;letter-spacing:0.164px;transform-origin:0 0;transform:scaleX(1.04);-webkit-text-stroke:0.35px #56565c;">Trust elected</span>
<span class="t" style="left:1720.0px;top:526px;font-size:12.3px;line-height:18px;color:#56565c;letter-spacing:0.353px;transform-origin:0 0;transform:scaleX(1.04);-webkit-text-stroke:0.35px #56565c;">officials/politicians give full/</span>
<span class="t" style="left:1720.0px;top:544px;font-size:12.3px;line-height:18px;color:#56565c;letter-spacing:0.129px;transform-origin:0 0;transform:scaleX(1.04);-webkit-text-stroke:0.35px #56565c;">accurate climate change info -</span>
<span class="t" style="left:1720.0px;top:562px;font-size:12.3px;line-height:18px;color:#56565c;letter-spacing:0.028px;transform-origin:0 0;transform:scaleX(1.04);-webkit-text-stroke:0.35px #56565c;">Filters</span>
<span class="t" style="left:1740.8px;top:583px;font-size:11px;line-height:16px;color:#2a7f96;-webkit-text-stroke:0.3px #2a7f96;">No</span>
<span class="t" style="left:1740.8px;top:604px;font-size:11px;line-height:16px;color:#2a7f96;-webkit-text-stroke:0.3px #2a7f96;">Yes</span>
<span class="t" style="left:1720.0px;top:636px;font-size:12.3px;line-height:18px;color:#56565c;letter-spacing:-0.022px;transform-origin:0 0;transform:scaleX(1.04);-webkit-text-stroke:0.35px #56565c;">Trust large businesses and</span>
<span class="t" style="left:1720.0px;top:654px;font-size:12.3px;line-height:18px;color:#56565c;letter-spacing:0.269px;transform-origin:0 0;transform:scaleX(1.04);-webkit-text-stroke:0.35px #56565c;">corporations give full/ accu-</span>
<span class="t" style="left:1720.0px;top:672px;font-size:12.3px;line-height:18px;color:#56565c;letter-spacing:0.111px;transform-origin:0 0;transform:scaleX(1.04);-webkit-text-stroke:0.35px #56565c;">rate climate change info -</span>
<span class="t" style="left:1720.0px;top:690px;font-size:12.3px;line-height:18px;color:#56565c;letter-spacing:0.028px;transform-origin:0 0;transform:scaleX(1.04);-webkit-text-stroke:0.35px #56565c;">Filters</span>
<span class="t" style="left:1740.8px;top:711px;font-size:11px;line-height:16px;color:#2a7f96;-webkit-text-stroke:0.3px #2a7f96;">No</span>
<span class="t" style="left:1740.8px;top:732px;font-size:11px;line-height:16px;color:#2a7f96;-webkit-text-stroke:0.3px #2a7f96;">Yes</span>
<span class="t" style="left:1720.0px;top:764px;font-size:12.3px;line-height:18px;color:#56565c;letter-spacing:0.188px;transform-origin:0 0;transform:scaleX(1.04);-webkit-text-stroke:0.35px #56565c;">Trust news media give full/</span>
<span class="t" style="left:1720.0px;top:782px;font-size:12.3px;line-height:18px;color:#56565c;letter-spacing:0.129px;transform-origin:0 0;transform:scaleX(1.04);-webkit-text-stroke:0.35px #56565c;">accurate climate change info -</span>
<span class="t" style="left:1720.0px;top:800px;font-size:12.3px;line-height:18px;color:#56565c;letter-spacing:0.028px;transform-origin:0 0;transform:scaleX(1.04);-webkit-text-stroke:0.35px #56565c;">Filters</span>
<span class="t" style="left:1740.8px;top:821px;font-size:11px;line-height:16px;color:#2a7f96;-webkit-text-stroke:0.3px #2a7f96;">No</span>
<span class="t" style="left:1740.8px;top:842px;font-size:11px;line-height:16px;color:#2a7f96;-webkit-text-stroke:0.3px #2a7f96;">Yes</span>
<span class="t" style="left:1720.0px;top:873px;font-size:12.3px;line-height:18px;color:#56565c;letter-spacing:0.202px;transform-origin:0 0;transform:scaleX(1.04);-webkit-text-stroke:0.35px #56565c;">Trust social give full/ accurate</span>
<span class="t" style="left:1720.0px;top:891px;font-size:12.3px;line-height:18px;color:#56565c;letter-spacing:0.125px;transform-origin:0 0;transform:scaleX(1.04);-webkit-text-stroke:0.35px #56565c;">climate change info - Filters</span>
<div class="a" style="left:1716px;top:236px;width:103.5px;height:8.6px;background:#e5e6eb;"></div>
</section>
</body></html>
